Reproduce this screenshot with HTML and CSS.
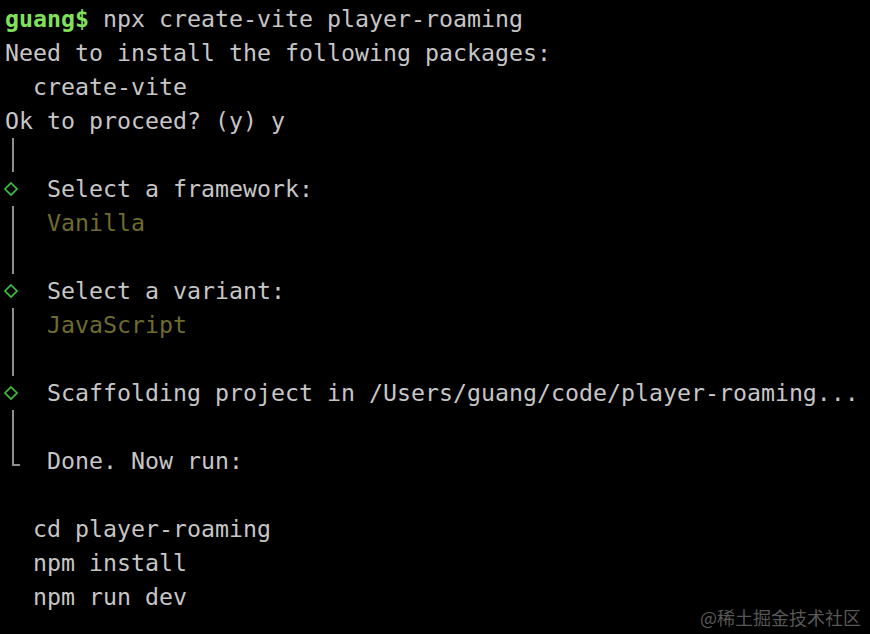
FILE: index.html
```html
<!DOCTYPE html>
<html>
<head>
<meta charset="utf-8">
<link rel="stylesheet" href="styles.css">
</head>
<body>
<div class="term">
  <div class="line"><span class="prompt">guang$</span> npx create-vite player-roaming</div>
  <div class="line">Need to install the following packages:</div>
  <div class="line">  create-vite</div>
  <div class="line">Ok to proceed? (y) y</div>
  <div class="line"><span class="gut"><span class="bar"></span></span></div>
  <div class="line"><span class="gut"><svg class="dia" width="16" height="16" viewBox="0 0 16 16"><path d="M8 2 L14 8 L8 14 L2 8 Z" fill="none" stroke="#3fc23f" stroke-width="1.7"/></svg></span>Select a framework:</div>
  <div class="line"><span class="gut"><span class="bar"></span></span><span class="muted">Vanilla</span></div>
  <div class="line"><span class="gut"><span class="bar"></span></span></div>
  <div class="line"><span class="gut"><svg class="dia" width="16" height="16" viewBox="0 0 16 16"><path d="M8 2 L14 8 L8 14 L2 8 Z" fill="none" stroke="#3fc23f" stroke-width="1.7"/></svg></span>Select a variant:</div>
  <div class="line"><span class="gut"><span class="bar"></span></span><span class="muted">JavaScript</span></div>
  <div class="line"><span class="gut"><span class="bar"></span></span></div>
  <div class="line"><span class="gut"><svg class="dia" width="16" height="16" viewBox="0 0 16 16"><path d="M8 2 L14 8 L8 14 L2 8 Z" fill="none" stroke="#3fc23f" stroke-width="1.7"/></svg></span>Scaffolding project in /Users/guang/code/player-roaming...</div>
  <div class="line"><span class="gut"><span class="bar"></span></span></div>
  <div class="line"><span class="gut"><span class="corner"></span></span>Done. Now run:</div>
  <div class="line"></div>
  <div class="line">  cd player-roaming</div>
  <div class="line">  npm install</div>
  <div class="line">  npm run dev</div>
</div>
<div class="mark">@稀土掘金技术社区</div>
</body>
</html>
```

FILE: styles.css
```css
html, body {
  margin: 0;
  padding: 0;
  background: #000;
}
body {
  width: 870px;
  height: 634px;
  overflow: hidden;
  position: relative;
}
.term {
  padding: 2px 0 0 5px;
  font-family: "DejaVu Sans Mono", "Liberation Mono", monospace;
  font-size: 23.25px;
  color: #c6c6c6;
}
.line {
  height: 34px;
  line-height: 34px;
  white-space: pre;
  display: flex;
  align-items: center;
}
.prompt {
  color: #80e05c;
  font-weight: bold;
}
.muted {
  color: #6e6c2c;
}
.gut {
  width: 42px;
  height: 34px;
  flex-shrink: 0;
  display: flex;
  align-items: center;
}
.bar {
  display: block;
  width: 2px;
  height: 34px;
  margin-left: 7px;
  background: #8e8e8e;
}
.corner {
  display: block;
  width: 6px;
  height: 20px;
  margin-left: 7px;
  align-self: flex-start;
  border-left: 2px solid #8e8e8e;
  border-bottom: 2px solid #8e8e8e;
}
.dia {
  display: block;
  margin-left: -2px;
}
.mark {
  position: absolute;
  right: 9px;
  bottom: 5px;
  font-family: "Noto Sans CJK SC", "Noto Sans", sans-serif;
  font-size: 18px;
  color: #585858;
  line-height: 24px;
}
```
